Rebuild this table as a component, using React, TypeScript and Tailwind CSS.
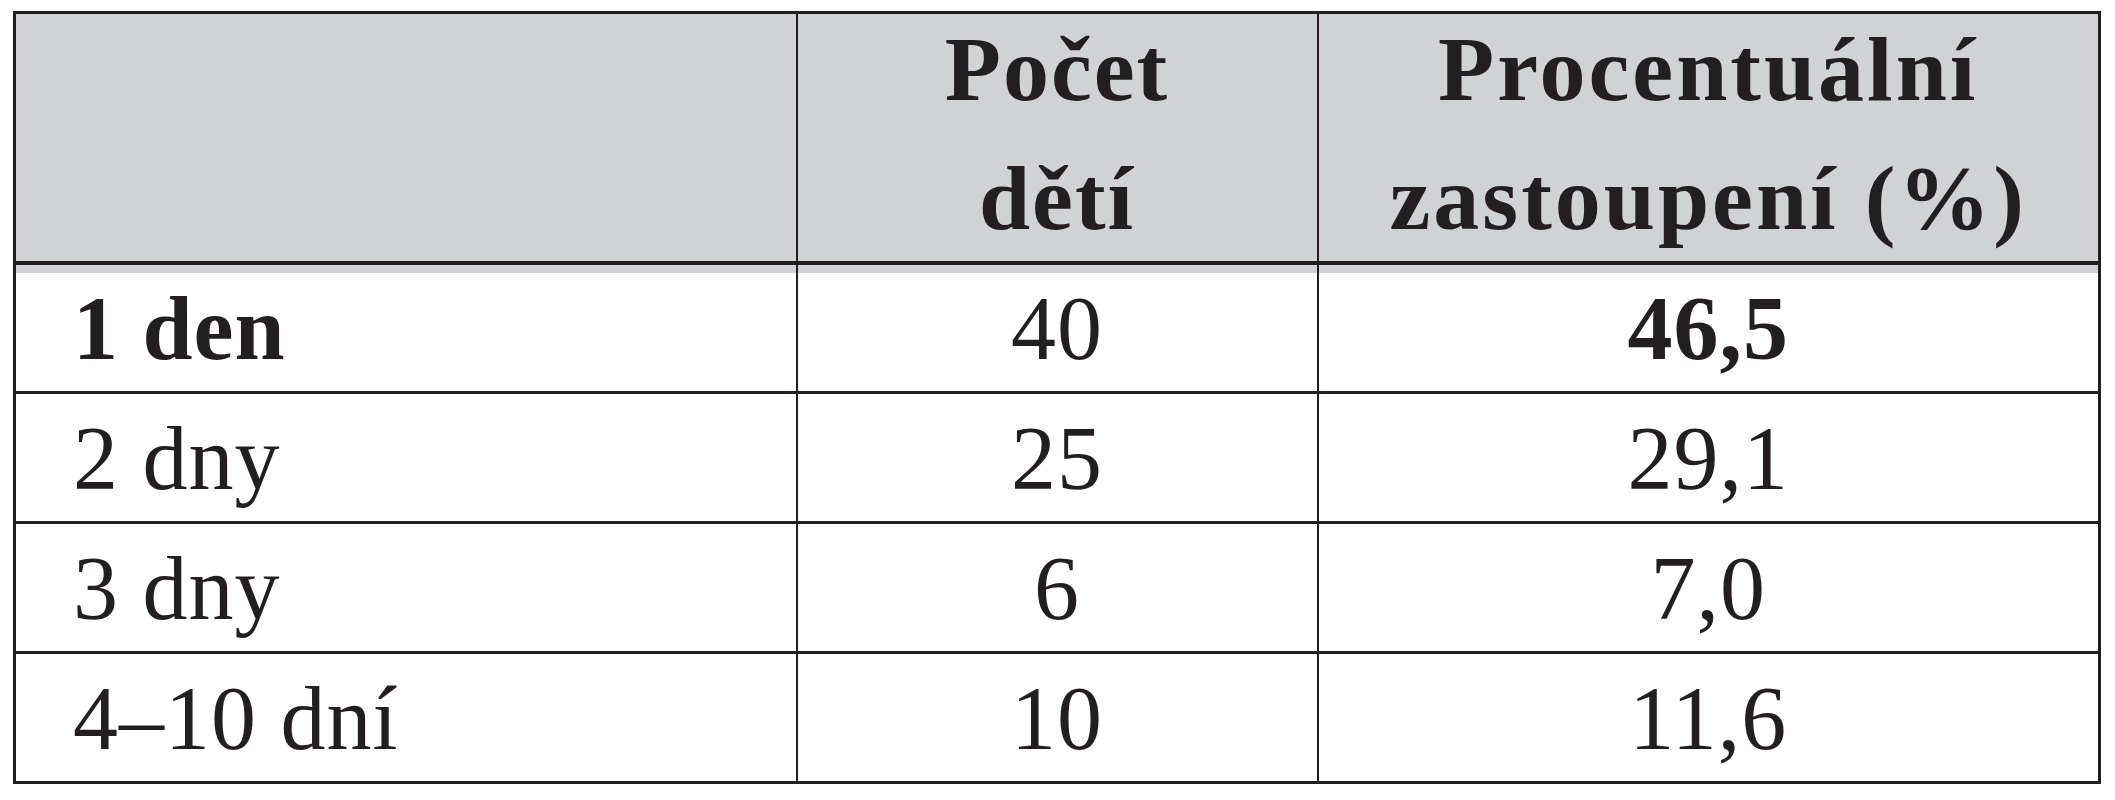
const rows = [
  { label: "1 den", count: "40", pct: "46,5", bold: true },
  { label: "2 dny", count: "25", pct: "29,1", bold: false },
  { label: "3 dny", count: "6", pct: "7,0", bold: false },
  { label: "4–10 dní", count: "10", pct: "11,6", bold: false },
];

export default function App() {
  return (
    <div className="min-h-[800px] w-[2115px] bg-white pl-[13px] pt-[11px] font-['Liberation_Serif',serif] text-[#231f20]">
      <table className="w-[2085px] table-fixed border-collapse border-[3px] border-[#231f20]">
        <colgroup>
          <col className="w-[782px]" />
          <col className="w-[521px]" />
          <col className="w-[782px]" />
        </colgroup>
        <thead>
          <tr className="h-[250px] border-b-[4px] border-[#231f20] bg-[#d1d2d4]">
            <th className="border-r-2 border-[#231f20]" />
            <th className="border-r-2 border-[#231f20] align-middle">
              <div className="flex flex-col items-center gap-[37px] pb-[8px] text-[92px] font-bold leading-none tracking-[2px]">
                <span>Počet</span>
                <span>dětí</span>
              </div>
            </th>
            <th className="align-middle">
              <div className="flex flex-col items-center gap-[37px] pb-[8px] text-[92px] font-bold leading-none tracking-[3px]">
                <span>Procentuální</span>
                <span>zastoupení (%)</span>
              </div>
            </th>
          </tr>
        </thead>
        <tbody>
          {rows.map((row, i) => (
            <tr
              key={row.label}
              className={
                "h-[130px] border-b-[3px] border-[#231f20] text-[90px] leading-none tracking-[1px] " +
                (i === 0 ? "shadow-[inset_0_10px_0_#d1d2d4]" : "")
              }
            >
              <td
                className={
                  "border-r-2 border-[#231f20] pl-[57px] pt-[2px] align-middle " +
                  (row.bold ? "font-bold" : "")
                }
              >
                {row.label}
              </td>
              <td className="border-r-2 border-[#231f20] pt-[2px] text-center align-middle">
                {row.count}
              </td>
              <td
                className={
                  "pt-[2px] text-center align-middle " + (row.bold ? "font-bold" : "")
                }
              >
                {row.pct}
              </td>
            </tr>
          ))}
        </tbody>
      </table>
    </div>
  );
}
